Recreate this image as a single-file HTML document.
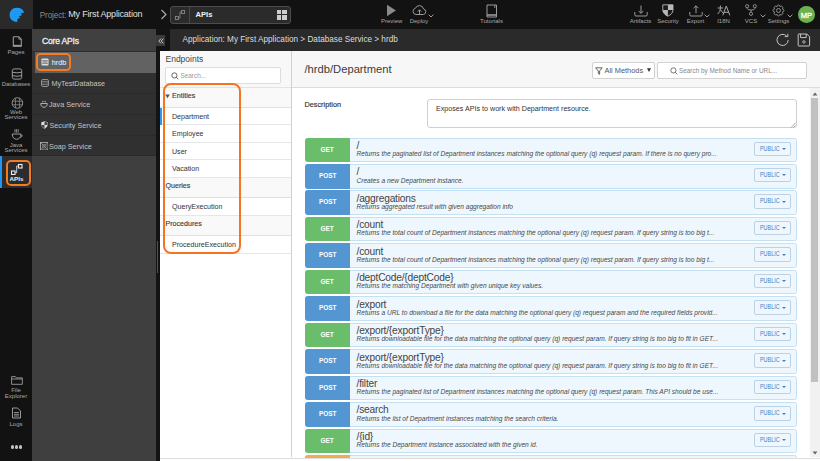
<!DOCTYPE html>
<html><head><meta charset="utf-8">
<style>
*{box-sizing:border-box;margin:0;padding:0}
html,body{width:820px;height:461px;overflow:hidden;background:#fff;font-family:"Liberation Sans",sans-serif}
.a{position:absolute}
#top{left:0;top:0;width:820px;height:29px;background:#121212}
#logo{left:0;top:0;width:33px;height:29px;background:#2a2a2a}
#side{left:0;top:29px;width:32px;height:432px;background:#121212}
.sl{position:absolute;left:0;width:32px;text-align:center;color:#a9a9a9;font-size:6px;line-height:6px}
#panel{left:32px;top:29px;width:124px;height:432px;background:#3f3f3f}
#phead{left:0;top:0;width:124px;height:22.5px;background:#404040;border-bottom:1px solid #2e2e2e}
.prow{position:absolute;left:0;width:124px;height:21px;background:#303030;border-bottom:1px solid #2a2a2a;color:#c4c4c4;font-size:7.2px;line-height:21px;padding-left:19.5px}
.tb{position:absolute;color:#a8a8a8;font-size:6px;line-height:6px;text-align:center;white-space:nowrap}
.sec{position:absolute;left:160px;width:131px;background:#f9f9f9;border-bottom:1px solid #e0e0e0;color:#333;font-size:7.1px;-webkit-text-stroke:0.12px #333;padding-left:5.5px;padding-bottom:2px;color:#3a3a3a;display:flex;align-items:center}
.itm{position:absolute;left:160px;width:131px;height:17.5px;border-bottom:1px solid #e6e6e6;color:#333;font-size:7.1px;padding-left:12px;padding-top:1.6px;display:flex;align-items:center}
.er{position:absolute;left:304.5px;width:492px;height:24.6px;background:#eef7fe;border:1px solid #c3e1f5;border-radius:2.5px}
.badge{position:absolute;left:-1px;top:-1px;width:45.5px;height:24.6px;border-radius:3px 0 0 3px;color:#fff;font-size:7.9px;font-weight:bold;text-align:center;line-height:24.6px}
.badge span{display:inline-block;transform:scaleX(0.82)}
.ep{position:absolute;left:51px;top:2.4px;color:#444;font-size:10.2px;line-height:10px;letter-spacing:-0.2px;white-space:nowrap}
.ed{position:absolute;left:51px;top:11.6px;color:#484848;font-size:6.6px;line-height:7px;font-style:italic;white-space:nowrap}
.pub{position:absolute;left:448px;top:3px;width:37.5px;height:14.5px;border:1px solid #bcd2e4;border-radius:2px;color:#3f7fc2;font-size:6.4px;line-height:12.5px;white-space:nowrap}
.pub b{position:absolute;left:5.2px;top:0;font-weight:normal;display:inline-block;transform:scaleX(0.85);transform-origin:0 50%}
.car{position:absolute;left:27.2px;top:5.5px;width:0;height:0;border-left:2.1px solid transparent;border-right:2.1px solid transparent;border-top:2.4px solid #3f7fc2}
</style></head><body>
<div id="top" class="a"></div>
<div id="logo" class="a">
 <svg class="a" style="left:9px;top:7px" width="16" height="16" viewBox="0 0 16 16"><path d="M15.1 5.6 C14.3 2.8 11.8 0.8 7.6 0.8 C3.6 0.8 0.6 4 0.6 7.9 C0.6 11.8 3.8 14.9 8.2 14.9 L8.6 11.8 L11.3 10.8 L9.7 9.2 L13 8.2 L11.7 6.6 Z" fill="#1f9bf6"/><path d="M2.5 4.8 Q7 3.2 12.2 4.6 M1.8 7.6 Q6 6 11 7.4 M2.5 10.5 Q5.5 9.2 9 10.2" fill="none" stroke="#1c8be0" stroke-width="0.45"/></svg>
</div>
<div id="side" class="a">
 <div class="a" style="left:0;top:127px;width:32px;height:32px;background:#2c2c2c"></div>
 <div class="a" style="left:0;top:127px;width:2px;height:32px;background:#2196f3"></div>

 <!-- Pages -->
 <svg class="a" style="left:11.5px;top:6.5px" width="11" height="12" viewBox="0 0 11 12"><path d="M1.3 1.5 Q1.3 0.8 2 0.8 H6.8 L9.3 3.3 V10.3 H1.3 Z" fill="none" stroke="#9a9a9a" stroke-width="1.1"/><path d="M1.3 9.6 H9.3" stroke="#9a9a9a" stroke-width="1.5"/><path d="M6.8 0.8 V3.3 H9.3" fill="none" stroke="#9a9a9a" stroke-width="0.7"/></svg>
 <div class="sl" style="top:20px">Pages</div>
 <!-- Databases -->
 <svg class="a" style="left:11px;top:38.5px" width="12" height="12" viewBox="0 0 12 12"><rect x="1.3" y="0.9" width="9.4" height="10.2" rx="1.8" fill="none" stroke="#9a9a9a" stroke-width="1"/><path d="M1.3 4.2 Q6 5.6 10.7 4.2 M1.3 7.6 Q6 9 10.7 7.6" fill="none" stroke="#9a9a9a" stroke-width="1"/></svg>
 <div class="sl" style="top:52px">Databases</div>
 <!-- Web -->
 <svg class="a" style="left:10.5px;top:67.5px" width="13" height="12" viewBox="0 0 13 12"><circle cx="6.4" cy="6" r="5.3" fill="none" stroke="#8c8c8c" stroke-width="1"/><path d="M4.4 1 V11 M8.4 1 V11 M1.2 4.2 H11.6 M1.2 7.8 H11.6" stroke="#8c8c8c" stroke-width="0.8"/></svg>
 <div class="sl" style="top:79.5px">Web</div>
 <div class="sl" style="top:85.3px">Services</div>
 <!-- Java -->
 <svg class="a" style="left:10.5px;top:99.5px" width="13" height="12" viewBox="0 0 13 12"><path d="M1.2 5 H10 C10 8.6 7.8 10.3 5.6 10.3 C3.4 10.3 1.2 8.6 1.2 5 Z" fill="none" stroke="#9a9a9a" stroke-width="1"/><path d="M9.9 5.8 Q12 6 11.2 7.4 L9.3 8.4" fill="none" stroke="#9a9a9a" stroke-width="0.8"/><path d="M4 0.2 V3.6 M5.6 0.2 V3.6 M7.2 0.2 V3.6" stroke="#9a9a9a" stroke-width="0.9"/></svg>
 <div class="sl" style="top:112.6px">Java</div>
 <div class="sl" style="top:118px">Services</div>
 <!-- APIs -->
 <svg class="a" style="left:10px;top:134px" width="13" height="12" viewBox="0 0 13 12"><rect x="8.5" y="1.5" width="3.5" height="3.5" fill="none" stroke="#eee" stroke-width="1.1"/><rect x="1.5" y="8" width="3.5" height="3.5" fill="none" stroke="#eee" stroke-width="1.1"/><path d="M8.5 3 H6.7 V9.7 H5" fill="none" stroke="#ddd" stroke-width="0.9"/></svg>
 <div class="sl" style="top:147px;left:0.5px;color:#eee;font-size:6.2px;font-weight:bold">APIs</div>
 <div class="a" style="left:6px;top:130.5px;width:25px;height:26px;border:2px solid #f47a24;border-radius:5px"></div>
 <!-- File explorer -->
 <svg class="a" style="left:10.7px;top:346.5px" width="12" height="9" viewBox="0 0 12 9"><path d="M0.6 0.6 H4.4 L5.4 1.9 H11.3 V8.3 H0.6 Z M0.6 3 H11.3" fill="none" stroke="#8e8e8e" stroke-width="1"/></svg>
 <div class="sl" style="top:358px">File</div>
 <div class="sl" style="top:364px">Explorer</div>
 <!-- Logs -->
 <svg class="a" style="left:11px;top:378px" width="11" height="12" viewBox="0 0 11 12"><path d="M1.5 1 H6.5 L9.5 4 V11 H1.5 Z" fill="none" stroke="#9a9a9a" stroke-width="1"/><path d="M3 5.5 H8 M3 7.3 H8 M3 9 H8" stroke="#9a9a9a" stroke-width="0.9"/></svg>
 <div class="sl" style="top:392px">Logs</div>
 <div class="a" style="left:10.5px;top:416.3px;width:12px;height:5px">
  <div class="a" style="left:0;top:0;width:3.6px;height:3.6px;border-radius:50%;background:#c4c4c4"></div>
  <div class="a" style="left:4.2px;top:0;width:3.6px;height:3.6px;border-radius:50%;background:#c4c4c4"></div>
  <div class="a" style="left:8.4px;top:0;width:3.6px;height:3.6px;border-radius:50%;background:#c4c4c4"></div>
 </div>
</div>
<div id="panel" class="a">
 <div id="phead" class="a"><span class="a" style="left:10px;top:7.8px;color:#eee;font-size:8.6px;letter-spacing:-0.2px;line-height:9px;-webkit-text-stroke:0.3px #eee;white-space:nowrap">Core APIs</span></div>
 <div class="prow" style="top:22.5px;left:2.5px;width:121.5px;height:21.5px;line-height:21.5px;border-bottom:none;background:#626262;color:#fafafa;padding-left:17.3px">hrdb</div><div class="a" style="left:0;top:22.5px;width:2.5px;height:21.5px;background:#353535"></div>
 <div class="prow" style="top:44px;height:21.2px;padding-left:19.5px">MyTestDatabase</div>
 <div class="prow" style="top:65.2px;height:20.7px;line-height:21.4px;padding-left:17px">Java Service</div>
 <div class="prow" style="top:85.9px;height:20.7px;line-height:22px;padding-left:17.5px">Security Service</div>
 <div class="prow" style="top:106.6px;height:20.6px;line-height:21.8px;padding-left:17px">Soap Service</div>
 <svg class="a" style="left:9px;top:29px" width="8" height="8" viewBox="0 0 8 8"><rect x="0.5" y="0.5" width="7" height="7" rx="1" fill="#ddd"/><path d="M1.2 2.8 H6.8 M1.2 5.2 H6.8" stroke="#5a5a5a" stroke-width="0.9"/><rect x="2" y="3.3" width="4" height="1.4" fill="#999"/></svg>
 <svg class="a" style="left:9px;top:50px" width="8" height="8" viewBox="0 0 8 8"><rect x="0.6" y="0.6" width="6.8" height="6.8" rx="1" fill="none" stroke="#aaa" stroke-width="0.9"/><path d="M1 2.8 H7 M1 5.2 H7" stroke="#aaa" stroke-width="0.8"/></svg>
 <svg class="a" style="left:7.8px;top:71px" width="8" height="8" viewBox="0 0 8 8"><path d="M0.7 3.5 H7.3 C7.3 6 5.8 7.3 4 7.3 C2.2 7.3 0.7 6 0.7 3.5 Z" fill="none" stroke="#bbb" stroke-width="0.9"/><path d="M2.5 0.8 V2.3 M4 0.8 V2.3 M5.5 0.8 V2.3" stroke="#bbb" stroke-width="0.7"/></svg>
 <svg class="a" style="left:8.5px;top:92.3px" width="7" height="8" viewBox="0 0 7 8"><path d="M3.5 0.3 L6.7 1.2 V3.6 C6.7 5.6 5.2 7 3.5 7.7 C1.8 7 0.3 5.6 0.3 3.6 V1.2 Z" fill="#ddd"/><path d="M3.5 0.8 V4 H6.4 V1.5 Z M3.5 4 H0.6 C0.8 5.7 2 6.8 3.5 7.3 Z" fill="#444"/></svg>
 <svg class="a" style="left:7.8px;top:112.5px" width="8.5" height="8.5" viewBox="0 0 8.5 8.5"><rect x="0.5" y="0.5" width="7.5" height="7.5" fill="none" stroke="#aaa" stroke-width="0.9"/><path d="M1 1 L7.5 7.5 M7.5 1 L1 7.5" stroke="#999" stroke-width="0.8"/><circle cx="4.25" cy="4.25" r="1.8" fill="none" stroke="#999" stroke-width="0.7"/></svg>
 <div class="a" style="left:4.4px;top:24.1px;width:34.8px;height:17.8px;border:2px solid #f47a24;border-radius:4.5px"></div>
</div>
<div class="a" style="left:156px;top:29px;width:14px;height:432px;background:#131313"></div><div class="a" style="left:156.6px;top:241px;width:1.8px;height:31.5px;background:#505050"></div>
<div class="a" style="left:156px;top:35px;width:8.6px;height:10.6px;background:#3a3a3a"></div><svg class="a" style="left:157.5px;top:37.5px" width="6" height="6" viewBox="0 0 6 6"><path d="M3 0.6 L0.8 3 L3 5.4 M5.4 0.6 L3.2 3 L5.4 5.4" fill="none" stroke="#d0d0d0" stroke-width="0.9"/></svg>
<div class="a" style="left:170px;top:29px;width:650px;height:22px;background:#2a2a2a"></div>
<div class="a" style="left:182.5px;top:35px;color:#ddd;font-size:8.2px;line-height:9px;white-space:nowrap">Application: My First Application &gt; Database Service &gt; hrdb</div>

<!-- top bar content -->
<div class="a" style="left:39.8px;top:10.8px;font-size:8.2px;line-height:9px;white-space:nowrap;color:#8a8a8a;letter-spacing:-0.15px">Project:</div><div class="a" style="left:68.3px;top:10.3px;font-size:9px;line-height:9px;white-space:nowrap;color:#e0e0e0;letter-spacing:-0.2px">My First Application</div>
<svg class="a" style="left:160px;top:9px" width="8" height="11" viewBox="0 0 8 11"><path d="M1.5 1 L6 5.5 L1.5 10" fill="none" stroke="#aaa" stroke-width="1.2"/></svg>
<div class="a" style="left:170px;top:6px;width:121px;height:18px;border:1px solid #4d4d4d;border-radius:3px;background:#2b2b2b"></div>
<div class="a" style="left:189px;top:7px;width:1px;height:16px;background:#4a4a4a"></div>
<svg class="a" style="left:174px;top:9px" width="12" height="12" viewBox="0 0 12 12"><rect x="7.6" y="1.6" width="3" height="3" fill="none" stroke="#8a8a8a" stroke-width="0.9"/><rect x="1.4" y="7.4" width="3" height="3" fill="none" stroke="#8a8a8a" stroke-width="0.9"/><path d="M7.6 3 H6 V9 H4.4" fill="none" stroke="#8a8a8a" stroke-width="0.8"/></svg>
<div class="a" style="left:195.5px;top:10.5px;color:#f2f2f2;font-size:7.6px;font-weight:bold;line-height:8px">APIs</div>
<div class="a" style="left:277px;top:10px;width:4.3px;height:4.3px;background:#ccc"></div>
<div class="a" style="left:282.3px;top:10px;width:4.3px;height:4.3px;background:#ccc"></div>
<div class="a" style="left:277px;top:15.3px;width:4.3px;height:4.3px;background:#ccc"></div>
<div class="a" style="left:282.3px;top:15.3px;width:4.3px;height:4.3px;background:#ccc"></div>
<!-- preview -->
<svg class="a" style="left:386px;top:4px" width="11" height="13" viewBox="0 0 11 13"><path d="M1 0.7 L10 6.5 L1 12.3 Z" fill="#8a8a8a"/></svg>
<div class="tb" style="left:381px;top:18px;width:21px">Preview</div>
<!-- deploy -->
<svg class="a" style="left:412px;top:4px" width="15" height="12" viewBox="0 0 15 12"><path d="M4 10.5 H11.5 A2.8 2.8 0 0 0 11.5 5 A4.2 4.2 0 0 0 3.5 4.2 A3.2 3.2 0 0 0 4 10.5 Z" fill="none" stroke="#9a9a9a" stroke-width="1"/><path d="M7.5 10.5 V6 M5.8 7.5 L7.5 5.8 L9.2 7.5" fill="none" stroke="#9a9a9a" stroke-width="1"/></svg>
<svg class="a" style="left:427.5px;top:13.5px" width="6" height="4" viewBox="0 0 6 4"><path d="M0.6 0.6 L3 3 L5.4 0.6" fill="none" stroke="#aaa" stroke-width="0.9"/></svg>
<div class="tb" style="left:409px;top:18px;width:20px">Deploy</div>
<!-- tutorials -->
<svg class="a" style="left:486px;top:3.5px" width="12" height="14" viewBox="0 0 12 14"><path d="M1 1 H10.5 V13 H1 Z" fill="none" stroke="#9a9a9a" stroke-width="1"/><path d="M1 11 H10.5" stroke="#9a9a9a" stroke-width="1.6"/><path d="M8.8 1 V4" stroke="#9a9a9a" stroke-width="0.9"/></svg>
<div class="tb" style="left:479px;top:18px;width:25px">Tutorials</div>
<!-- artifacts -->
<svg class="a" style="left:633.5px;top:4.5px" width="14" height="12" viewBox="0 0 14 12"><path d="M0.8 7 V9.8 Q0.8 11 2 11 H12 Q13.2 11 13.2 9.8 V7" fill="none" stroke="#9a9a9a" stroke-width="1"/><path d="M7 0.5 V8.3 M4.6 5.9 L7 8.3 L9.4 5.9" fill="none" stroke="#9a9a9a" stroke-width="1"/></svg>
<div class="tb" style="left:628px;top:18px;width:25px">Artifacts</div>
<!-- security -->
<svg class="a" style="left:662px;top:4.3px" width="12" height="13" viewBox="0 0 12 13"><path d="M0.8 0.8 H11 V6 C11 9 8.6 11 5.9 12.2 C3.2 11 0.8 9 0.8 6 Z" fill="#1a1a1a" stroke="#b8b8b8" stroke-width="0.9"/><path d="M5.9 0.8 H11 V6 H5.9 Z" fill="#b8b8b8"/><path d="M0.8 6 H5.9 V12.2 C3.2 11 0.8 9 0.8 6 Z" fill="#b8b8b8"/></svg>
<div class="tb" style="left:656px;top:18px;width:24px">Security</div>
<!-- export -->
<svg class="a" style="left:689px;top:4.5px" width="14" height="12" viewBox="0 0 14 12"><path d="M0.8 7 V9.8 Q0.8 11 2 11 H12 Q13.2 11 13.2 9.8 V7" fill="none" stroke="#9a9a9a" stroke-width="1"/><path d="M7 8.3 V0.8 M4.6 3.2 L7 0.8 L9.4 3.2" fill="none" stroke="#9a9a9a" stroke-width="1"/></svg>
<svg class="a" style="left:704px;top:13.5px" width="6" height="4" viewBox="0 0 6 4"><path d="M0.6 0.6 L3 3 L5.4 0.6" fill="none" stroke="#aaa" stroke-width="0.9"/></svg>
<div class="tb" style="left:686px;top:18px;width:19px">Export</div>
<!-- i18n -->
<svg class="a" style="left:716.5px;top:4.5px" width="14" height="11" viewBox="0 0 14 11"><path d="M0.6 3 H6.2 M3.4 0.5 V3.5 Q3.3 7 0.6 9 M3.6 4.5 Q4.6 7 6.4 8.2" fill="none" stroke="#aaa" stroke-width="0.95"/><path d="M5.8 10.3 L9.3 1 L12.8 10.3 M7 7.3 H11.6" fill="none" stroke="#aaa" stroke-width="1"/></svg>
<div class="tb" style="left:717px;top:18px;width:13px">I18N</div>
<!-- vcs -->
<svg class="a" style="left:744.5px;top:4px" width="12" height="12" viewBox="0 0 12 12"><circle cx="2.2" cy="2.2" r="1.6" fill="none" stroke="#9a9a9a" stroke-width="0.9"/><circle cx="9.8" cy="2.2" r="1.6" fill="none" stroke="#9a9a9a" stroke-width="0.9"/><circle cx="6" cy="9.8" r="1.6" fill="none" stroke="#9a9a9a" stroke-width="0.9"/><path d="M2.2 3.8 V4.5 Q2.2 6 6 6 Q9.8 6 9.8 4.5 V3.8 M6 6 V8.2" fill="none" stroke="#9a9a9a" stroke-width="0.9"/></svg>
<svg class="a" style="left:759.5px;top:13.5px" width="6" height="4" viewBox="0 0 6 4"><path d="M0.6 0.6 L3 3 L5.4 0.6" fill="none" stroke="#aaa" stroke-width="0.9"/></svg>
<div class="tb" style="left:744px;top:18px;width:14px">VCS</div>
<!-- settings -->
<svg class="a" style="left:772px;top:4px" width="13" height="13" viewBox="0 0 13 13"><path d="M10.20 4.97 C12.52 4.64 12.52 8.36 10.20 8.03 C12.07 9.44 9.44 12.07 8.03 10.20 C8.36 12.52 4.64 12.52 4.97 10.20 C3.56 12.07 0.93 9.44 2.80 8.03 C0.48 8.36 0.48 4.64 2.80 4.97 C0.93 3.56 3.56 0.93 4.97 2.80 C4.64 0.48 8.36 0.48 8.03 2.80 C9.44 0.93 12.07 3.56 10.20 4.97 Z" fill="none" stroke="#9a9a9a" stroke-width="0.9"/><circle cx="6.5" cy="6.5" r="2" fill="none" stroke="#9a9a9a" stroke-width="0.9"/></svg>
<svg class="a" style="left:786.7px;top:13.5px" width="6" height="4" viewBox="0 0 6 4"><path d="M0.6 0.6 L3 3 L5.4 0.6" fill="none" stroke="#aaa" stroke-width="0.9"/></svg>
<div class="tb" style="left:767px;top:18px;width:23px">Settings</div>
<!-- avatar -->
<div class="a" style="left:798px;top:6.4px;width:16.5px;height:16.5px;border-radius:50%;background:#6bb24f"></div><div class="a" style="left:798px;top:11.6px;width:16.5px;color:#fff;font-size:7.6px;line-height:7px;text-align:center;letter-spacing:-0.2px;-webkit-text-stroke:0.3px #fff">MP</div>
<!-- refresh/save -->
<svg class="a" style="left:775.5px;top:33px" width="14" height="14" viewBox="0 0 14 14"><path d="M12.2 7 A5.6 5.6 0 1 1 10.6 3" fill="none" stroke="#c4c4c4" stroke-width="1"/><path d="M11.8 0.8 V3.6 H8.8" fill="none" stroke="#c4c4c4" stroke-width="1"/></svg>
<svg class="a" style="left:796.5px;top:33px" width="14" height="14" viewBox="0 0 14 14"><path d="M1.2 1.6 Q1.2 1 1.8 1 H9.8 L12.6 3.8 V12.4 Q12.6 13 12 13 H1.8 Q1.2 13 1.2 12.4 Z" fill="none" stroke="#c4c4c4" stroke-width="1"/><path d="M3.6 1 V4.6 H9.2 V1" fill="none" stroke="#c4c4c4" stroke-width="1"/><circle cx="6.9" cy="8.9" r="1.2" fill="none" stroke="#c4c4c4" stroke-width="0.9"/></svg>
<!-- content -->

<div class="a" style="left:160px;top:51px;width:660px;height:410px;background:#fff"></div>
<!-- endpoints panel -->
<div class="a" style="left:160px;top:51px;width:131px;height:36px;background:#f8f8f8"></div>
<div class="a" style="left:165.5px;top:55px;color:#444;font-size:8.5px;line-height:9px">Endpoints</div>
<div class="a" style="left:165px;top:66.8px;width:115.5px;height:17px;border:1px solid #ddd;border-radius:2px;background:#fff"></div>
<svg class="a" style="left:171px;top:71.5px" width="8" height="8" viewBox="0 0 8 8"><circle cx="3.4" cy="3.4" r="2.6" fill="none" stroke="#555" stroke-width="0.9"/><path d="M5.3 5.3 L7.3 7.3" stroke="#555" stroke-width="0.9"/></svg>
<div class="a" style="left:180.5px;top:71.5px;color:#999;font-size:6.4px;line-height:7px">Search...</div>
<div class="a" style="left:160px;top:87px;width:131px;height:1px;background:#e3e3e3"></div>
<div class="sec" style="top:88px;height:19.6px"><svg width="5" height="4.5" viewBox="0 0 5 4.5" style="margin-right:1.8px;margin-left:-0.3px"><path d="M0.2 0.4 H4.8 L2.5 4.2 Z" fill="#555"/></svg>Entities</div>
<div class="itm" style="top:107.6px">Department</div>
<div class="itm" style="top:125px">Employee</div>
<div class="itm" style="top:142.5px">User</div>
<div class="itm" style="top:160px">Vacation</div>
<div class="sec" style="top:177.5px;height:20.2px">Queries</div>
<div class="itm" style="top:197.7px;height:18px">QueryExecution</div>
<div class="sec" style="top:215.5px;height:20px">Procedures</div>
<div class="itm" style="top:235px;height:18.5px">ProcedureExecution</div>
<div class="a" style="left:160.2px;top:108px;width:1.9px;height:16.8px;background:#2e96ec"></div>
<div class="a" style="left:163px;top:83.3px;width:77.8px;height:170.9px;border:2px solid #f47424;border-radius:8px"></div>
<div class="a" style="left:290.8px;top:51px;width:1px;height:406px;background:#d0d0d0"></div>
<!-- main -->
<div class="a" style="left:292px;top:51px;width:528px;height:36.5px;background:#f7f7f7;border-bottom:1px solid #dcdcdc"></div>
<div class="a" style="left:304.5px;top:63.5px;color:#3c3c3c;font-size:11.2px;line-height:11px;white-space:nowrap">/hrdb/Department</div>
<div class="a" style="left:592px;top:62px;width:62.8px;height:16.5px;border:1px solid #d2d2d2;border-radius:2px;background:#fff"></div>
<svg class="a" style="left:594.5px;top:66.5px" width="8" height="8" viewBox="0 0 8 8"><path d="M0.6 0.8 H7.2 L4.6 4 V7.3 L3.3 6.6 V4 Z" fill="none" stroke="#555" stroke-width="0.9"/></svg>
<div class="a" style="left:604.5px;top:66.5px;color:#555;font-size:7.4px;line-height:8px;white-space:nowrap">All Methods</div><svg class="a" style="left:646.6px;top:68.2px" width="4" height="4" viewBox="0 0 4 4"><path d="M0 0.2 H4 L2 4 Z" fill="#333"/></svg>
<div class="a" style="left:657.3px;top:62px;width:150px;height:16.5px;border:1px solid #d2d2d2;border-radius:2px;background:#fff"></div>
<svg class="a" style="left:670px;top:66.5px" width="8" height="8" viewBox="0 0 8 8"><circle cx="3.4" cy="3.4" r="2.6" fill="none" stroke="#666" stroke-width="0.9"/><path d="M5.3 5.3 L7.3 7.3" stroke="#666" stroke-width="0.9"/></svg>
<div class="a" style="left:679px;top:67px;color:#888;font-size:6.4px;line-height:7px;white-space:nowrap">Search by Method Name or URL...</div>
<div class="a" style="left:304.5px;top:100.5px;color:#333;font-size:7.3px;line-height:8px;-webkit-text-stroke:0.15px #333">Description</div>
<div class="a" style="left:426.8px;top:99.2px;width:370px;height:29px;border:1px solid #d0d0d0;border-radius:3px"></div>
<div class="a" style="left:436px;top:105px;color:#333;font-size:7.15px;line-height:8px;white-space:nowrap">Exposes APIs to work with Department resource.</div>
<svg class="a" style="left:790px;top:121.5px" width="6" height="6" viewBox="0 0 6 6"><path d="M5.5 1 L1 5.5 M5.5 3.5 L3.5 5.5" stroke="#888" stroke-width="0.7"/></svg>
<div class="er" style="top:137.50px"><div class="badge" style="background:#6abd6b"><span>GET</span></div><div class="ep">/</div><div class="ed">Returns the paginated list of Department instances matching the optional query (q) request param. If there is no query pro...</div><div class="pub"><b>PUBLIC</b><span class="car"></span></div></div>
<div class="er" style="top:163.96px"><div class="badge" style="background:#5496d2"><span>POST</span></div><div class="ep">/</div><div class="ed">Creates a new Department instance.</div><div class="pub"><b>PUBLIC</b><span class="car"></span></div></div>
<div class="er" style="top:190.42px"><div class="badge" style="background:#5496d2"><span>POST</span></div><div class="ep">/aggregations</div><div class="ed">Returns aggregated result with given aggregation info</div><div class="pub"><b>PUBLIC</b><span class="car"></span></div></div>
<div class="er" style="top:216.88px"><div class="badge" style="background:#6abd6b"><span>GET</span></div><div class="ep">/count</div><div class="ed">Returns the total count of Department instances matching the optional query (q) request param. If query string is too big t...</div><div class="pub"><b>PUBLIC</b><span class="car"></span></div></div>
<div class="er" style="top:243.34px"><div class="badge" style="background:#5496d2"><span>POST</span></div><div class="ep">/count</div><div class="ed">Returns the total count of Department instances matching the optional query (q) request param. If query string is too big t...</div><div class="pub"><b>PUBLIC</b><span class="car"></span></div></div>
<div class="er" style="top:269.80px"><div class="badge" style="background:#6abd6b"><span>GET</span></div><div class="ep">/deptCode/{deptCode}</div><div class="ed">Returns the matching Department with given unique key values.</div><div class="pub"><b>PUBLIC</b><span class="car"></span></div></div>
<div class="er" style="top:296.26px"><div class="badge" style="background:#5496d2"><span>POST</span></div><div class="ep">/export</div><div class="ed">Returns a URL to download a file for the data matching the optional query (q) request param and the required fields provid...</div><div class="pub"><b>PUBLIC</b><span class="car"></span></div></div>
<div class="er" style="top:322.72px"><div class="badge" style="background:#6abd6b"><span>GET</span></div><div class="ep">/export/{exportType}</div><div class="ed">Returns downloadable file for the data matching the optional query (q) request param. If query string is too big to fit in GET...</div><div class="pub"><b>PUBLIC</b><span class="car"></span></div></div>
<div class="er" style="top:349.18px"><div class="badge" style="background:#5496d2"><span>POST</span></div><div class="ep">/export/{exportType}</div><div class="ed">Returns downloadable file for the data matching the optional query (q) request param. If query string is too big to fit in GET...</div><div class="pub"><b>PUBLIC</b><span class="car"></span></div></div>
<div class="er" style="top:375.64px"><div class="badge" style="background:#5496d2"><span>POST</span></div><div class="ep">/filter</div><div class="ed">Returns the paginated list of Department instances matching the optional query (q) request param. This API should be use...</div><div class="pub"><b>PUBLIC</b><span class="car"></span></div></div>
<div class="er" style="top:402.10px"><div class="badge" style="background:#5496d2"><span>POST</span></div><div class="ep">/search</div><div class="ed">Returns the list of Department instances matching the search criteria.</div><div class="pub"><b>PUBLIC</b><span class="car"></span></div></div>
<div class="er" style="top:428.56px"><div class="badge" style="background:#6abd6b"><span>GET</span></div><div class="ep">/{id}</div><div class="ed">Returns the Department instance associated with the given id.</div><div class="pub"><b>PUBLIC</b><span class="car"></span></div></div>
<div class="er" style="top:455.02px"><div class="badge" style="background:#f0ad4e"><span>PUT</span></div><div class="ep">/{id}</div><div class="ed">Updates the Department instance associated with the given id.</div><div class="pub"><b>PUBLIC</b><span class="car"></span></div></div>
<!-- scrollbar -->
<div class="a" style="left:809.5px;top:88px;width:10px;height:369px;background:#f1f1f1"></div>
<div class="a" style="left:810.5px;top:98px;width:7.3px;height:284px;background:#c1c1c1"></div>
<svg class="a" style="left:811.5px;top:91.5px" width="6" height="4" viewBox="0 0 6 4"><path d="M0.5 3.5 L3 0.5 L5.5 3.5 Z" fill="#666"/></svg>
<svg class="a" style="left:811.5px;top:450.5px" width="6" height="4" viewBox="0 0 6 4"><path d="M0.5 0.5 L3 3.5 L5.5 0.5 Z" fill="#666"/></svg>
<div class="a" style="left:160px;top:458px;width:660px;height:3px;background:#fff;border-top:1px solid #ddd"></div>

</body></html>
